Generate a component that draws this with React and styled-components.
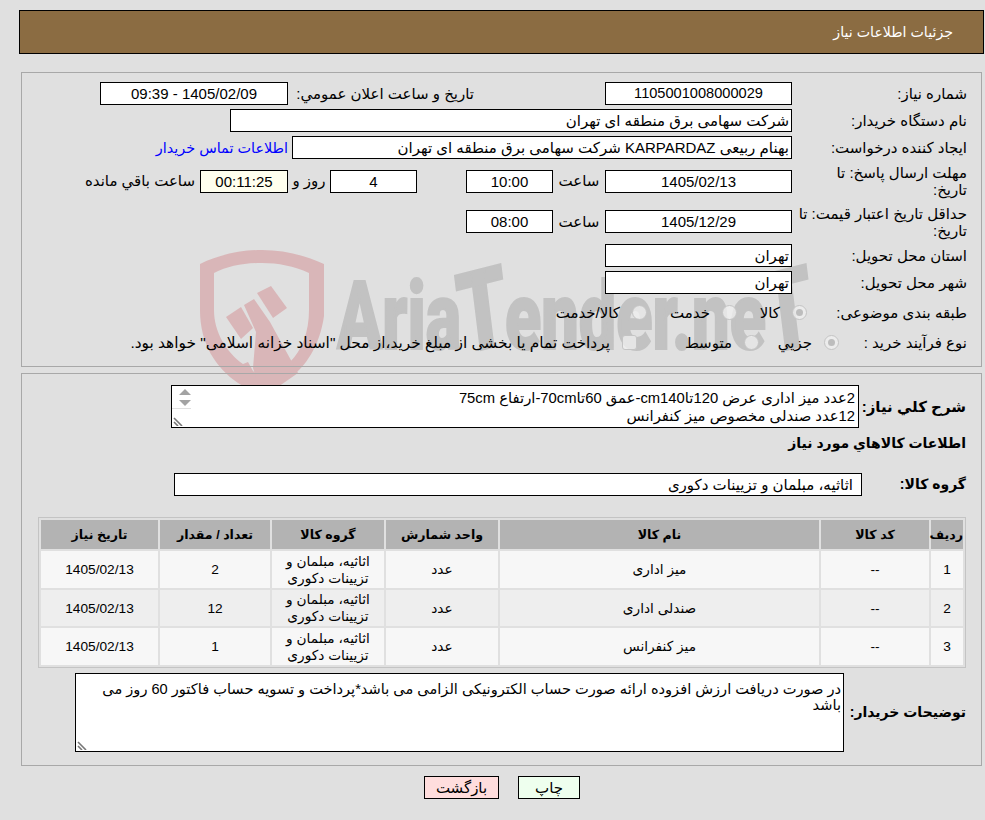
import styled, { createGlobalStyle, css } from 'styled-components'

const GlobalStyle = createGlobalStyle`
  html, body {
    margin: 0;
    padding: 0;
    background: #e0e0e0;
  }
  body {
    font-family: "Liberation Sans", "DejaVu Sans", sans-serif;
    font-size: 15px;
    color: #000;
  }
  * { box-sizing: border-box; }
`

const Page = styled.div`
  position: relative;
  width: 985px;
  height: 820px;
  padding: 10px 1px 0 19px;
  direction: rtl;
  overflow: hidden;
`
const Header = styled.div`
  height: 44px;
  background: #8b6c42;
  border: 1px solid #000;
  color: #fff;
  font-size: 14.2px;
  line-height: 42px;
  padding-right: 30px;
`
const Panel = styled.div`
  position: relative;
  z-index: 1;
  margin: ${p => p.$top}px 2px 0 2px;
  height: ${p => p.$h}px;
  border: 1px solid #a8a8a8;
  padding: ${p => p.$pad}px ${p => p.$side}px 0 15px;
`
const Rows = styled.div`
  display: flex;
  flex-direction: column;
  gap: 4px;
`
const Row = styled.div`
  display: flex;
  align-items: center;
  height: ${p => p.$h || 23}px;
`
const Label = styled.div`
  flex: none;
  width: ${p => p.$w || 175}px;
  white-space: nowrap;
  line-height: 17px;
  ${p => p.$bold && css`font-weight: bold; font-size: 14px;`}
  ${p => p.$big && css`font-size: 15px;`}
`
const Field = styled.div`
  flex: none;
  width: ${p => p.$w}px;
  height: ${p => p.$h || 23}px;
  margin-inline-start: ${p => p.$ms || 0}px;
  background: ${p => p.$bg || '#fff'};
  border: 1px solid #000;
  font-size: ${p => (p.$start || p.$date ? 15 : 14.6)}px;
  line-height: 21px;
  white-space: nowrap;
  overflow: hidden;
  text-align: ${p => (p.$start ? 'right' : 'center')};
  padding: 0 ${p => (p.$start ? 2 : 0)}px;
`
const Inline = styled.span`
  flex: none;
  width: ${p => p.$w || 'auto'}${p => (p.$w ? 'px' : '')};
  margin-inline-start: ${p => p.$ms || 0}px;
  text-align: ${p => (p.$w ? 'center' : 'right')};
  white-space: nowrap;
`
const ContactLink = styled.a`
  flex: none;
  margin-inline-start: 4px;
  color: #0000ff;
  font-size: 14.4px;
  white-space: nowrap;
`
const Radio = styled.span`
  flex: none;
  width: 15px;
  height: 15px;
  border-radius: ${p => (p.$square ? '3px' : '50%')};
  border: 1px solid #c4c4c4;
  background: rgba(240, 240, 240, 0.75);
  display: flex;
  align-items: center;
  justify-content: center;
  &::after {
    content: '';
    width: 7px;
    height: 7px;
    border-radius: 50%;
    background: ${p => (p.$on ? '#bdbdbd' : 'transparent')};
  }
`
const RadioText = styled.span`
  flex: none;
  width: ${p => p.$w}px;
  margin-inline-start: 12px;
  font-size: ${p => p.$size || 15}px;
  white-space: nowrap;
`
const Watermark = styled.div`
  position: absolute;
  left: 198px;
  top: 248px;
  z-index: 0;
  pointer-events: none;
`
const WatermarkText = styled.div`
  position: absolute;
  left: 337px;
  top: 252px;
  z-index: 0;
  direction: ltr;
  color: #c2c2c2;
  font-family: "Roboto", "Liberation Sans", sans-serif;
  font-weight: 900;
  font-size: 95px;
  line-height: 130px;
  -webkit-text-stroke: 2px #c2c2c2;
  white-space: nowrap;
  transform: scaleX(0.7);
  transform-origin: left center;
  pointer-events: none;
`
const WatermarkCap = styled.span`
  display: inline-block;
  font-size: 112px;
  line-height: 100px;
  margin: 0 -4px;
  transform: rotate(-10deg);
`
const TextBox = styled.div`
  position: relative;
  flex: none;
  width: ${p => p.$w}px;
  height: ${p => p.$h}px;
  background: #fff;
  border: 1px solid #000;
  font-size: ${p => p.$size || 14.8}px;
  padding: ${p => p.$pad || '3px 3px 0 0'};
  line-height: ${p => p.$lh}px;
  overflow: hidden;
`
const Gutter = styled.div`
  position: absolute;
  left: 0;
  top: 0;
  width: 19px;
  height: 100%;
  background: #fff;
`
const GutterRule = styled.div`
  height: 1px;
  margin-top: 2px;
  background: #e0e0e0;
`
const Arrow = styled.span`
  display: block;
  width: 0;
  margin: ${p => p.$top}px 0 0 3px;
  border-left: 6px solid transparent;
  border-right: 6px solid transparent;
  ${p => (p.$up
    ? css`border-bottom: 6px solid #a3a3a3;`
    : css`border-top: 6px solid #a3a3a3;`)}
`
const GripBox = styled.svg`
  position: absolute;
  left: 1px;
  bottom: 1px;
  width: 10px;
  height: 10px;
`
const SectionTitle = styled.div`
  font-weight: bold;
  font-size: 14px;
  height: 22px;
  line-height: 22px;
  margin-top: 4px;
  white-space: nowrap;
`
const ItemsTable = styled.table`
  direction: rtl;
  width: 928px;
  margin: ${p => p.$top}px 0 0 0;
  table-layout: fixed;
  border: 1px solid #c4c4c4;
  border-spacing: 2px;
  font-size: 13.7px;
`
const Head = styled.th`
  background: #b3b3b3;
  height: 29px;
  padding: 0;
  font-weight: bold;
  font-size: 12.6px;
  white-space: nowrap;
`
const Cell = styled.td`
  background: ${p => (p.$even ? '#eeeeee' : '#f7f7f7')};
  height: ${p => p.$h}px;
  padding: 0;
  text-align: center;
  line-height: 17px;
`
const Actions = styled.div`
  position: relative;
  z-index: 1;
  display: flex;
  justify-content: center;
  gap: 19px;
  margin: 10px 0 0 1px;
`
const Button = styled.button`
  width: ${p => p.$w}px;
  height: 23px;
  padding: 0;
  background: ${p => p.$bg};
  border: 1px solid #000;
  font: inherit;
  color: #000;
`

const Grip = () => (
  <GripBox viewBox="0 0 10 10">
    <path d="M1 2 L9 10 M1 6 L5 10" stroke="#777" strokeWidth="1.6" fill="none" />
  </GripBox>
)

const Logo = () => (
  <svg width="130" height="150" viewBox="0 0 130 150">
    <g fill="#d9b6b8">
      <path
        fillRule="evenodd"
        d="M2 16 C22 6 44 2 64 2 C86 2 106 7 126 16 L126 68 C122 98 106 120 95 127 L64 150 L40 135 C18 120 2 96 2 62 Z
           M16 25 L16 62 C16 84 28 104 45 116 L50 114 L55 123 L65 131 L92 114 C104 102 111 84 111 62 L111 25 C96 18 80 15 64 15 C46 15 30 18 16 25 Z"
      />
      <path d="M28 69 L43 59 L55 80 L43 91 Z" />
      <path d="M59 45 L73 38 L89 60 L75 70 Z" />
      <path d="M46 57 L56 51 L72 74 L100 125 L64 150 L55 120 L58 84 Z" />
    </g>
  </svg>
)

const items = [
  { id: 1, name: 'میز اداری', qty: 2, h: 37 },
  { id: 2, name: 'صندلی اداری', qty: 12, h: 36 },
  { id: 3, name: 'میز کنفرانس', qty: 1, h: 37 },
]

const App = () => {
  return (
    <Page>
      <GlobalStyle />
      <Watermark><Logo /></Watermark>
      <WatermarkText>Aria<WatermarkCap>T</WatermarkCap>ender.ne<WatermarkCap>T</WatermarkCap></WatermarkText>
      <Header>جزئیات اطلاعات نیاز</Header>

      <Panel $top={18} $h={295} $pad={9} $side={14}>
        <Rows>
          <Row>
            <Label>شماره نیاز:</Label>
            <Field $w={187}>1105001008000029</Field>
            <Label $w={181} style={{ marginInlineStart: 131 }}>تاریخ و ساعت اعلان عمومي:</Label>
            <Field $w={188} $ms={5} $date>1405/02/09 - 09:39</Field>
          </Row>
          <Row>
            <Label>نام دستگاه خریدار:</Label>
            <Field $w={562} $start>شرکت سهامی برق منطقه ای تهران</Field>
          </Row>
          <Row>
            <Label>ایجاد کننده درخواست:</Label>
            <Field $w={500} $start>بهنام ربیعی KARPARDAZ شرکت سهامی برق منطقه ای تهران</Field>
            <ContactLink>اطلاعات تماس خریدار</ContactLink>
          </Row>
          <Row $h={36}>
            <Label>مهلت ارسال پاسخ: تا<br />تاریخ:</Label>
            <Field $w={187} $date>1405/02/13</Field>
            <Inline $w={52}>ساعت</Inline>
            <Field $w={87} $date>10:00</Field>
            <Field $w={87} $ms={49} $date>4</Field>
            <Inline $w={42}>روز و</Inline>
            <Field $w={88} $bg="#ffffee" $date>00:11:25</Field>
            <Inline $ms={5}>ساعت باقي مانده</Inline>
          </Row>
          <Row $h={37}>
            <Label>حداقل تاریخ اعتبار قیمت: تا<br />تاریخ:</Label>
            <Field $w={187} $date>1405/12/29</Field>
            <Inline $w={52}>ساعت</Inline>
            <Field $w={87} $date>08:00</Field>
          </Row>
          <Row>
            <Label>استان محل تحویل:</Label>
            <Field $w={187} $start>تهران</Field>
          </Row>
          <Row>
            <Label>شهر محل تحویل:</Label>
            <Field $w={187} $start>تهران</Field>
          </Row>
          <Row $h={29}>
            <Label $w={160}>طبقه بندی موضوعی:</Label>
            <Radio $on />
            <RadioText $w={43}>کالا</RadioText>
            <Radio />
            <RadioText $w={63}>خدمت</RadioText>
            <Radio />
            <RadioText $w={70}>کالا/خدمت</RadioText>
          </Row>
          <Row>
            <Label $w={128}>نوع فرآیند خرید :</Label>
            <Radio $on />
            <RadioText $w={53}>جزیي</RadioText>
            <Radio />
            <RadioText $w={95}>متوسط</RadioText>
            <Radio $square />
            <RadioText $w={480} $size={15.4}>پرداخت تمام یا بخشی از مبلغ خرید،از محل "اسناد خزانه اسلامی" خواهد بود.</RadioText>
          </Row>
        </Rows>
      </Panel>

      <Panel $top={6} $h={393} $pad={11} $side={15}>
        <Row $h={43}>
          <Label $w={107} $bold $big>شرح کلي نیاز:</Label>
          <TextBox $w={688} $h={43} $lh={18}>
            2عدد میز اداری عرض 120تاcm140-عمق 60تا70cm-ارتفاع 75cm<br />
            12عدد صندلی مخصوص میز کنفرانس
            <Gutter>
              <Arrow $up $top={3} />
              <Arrow $top={5} />
              <GutterRule />
              <Grip />
            </Gutter>
          </TextBox>
        </Row>
        <SectionTitle>اطلاعات کالاهاي مورد نیاز</SectionTitle>
        <Row style={{ marginTop: 19 }}>
          <Label $w={104} $bold>گروه کالا:</Label>
          <Field $w={688} $start style={{ paddingRight: 8 }}>اثاثیه، مبلمان و تزیینات دکوری</Field>
        </Row>
        <ItemsTable $top={21}>
          <colgroup>
            <col width="32" /><col width="108" /><col width="319" /><col width="112" />
            <col width="112" /><col width="110" /><col width="117" />
          </colgroup>
          <thead>
            <tr>
              <Head>ردیف</Head>
              <Head>کد کالا</Head>
              <Head>نام کالا</Head>
              <Head>واحد شمارش</Head>
              <Head>گروه کالا</Head>
              <Head>تعداد / مقدار</Head>
              <Head>تاریخ نیاز</Head>
            </tr>
          </thead>
          <tbody>
            {items.map((item, i) => (
              <tr key={item.id}>
                <Cell $h={item.h} $even={i === 1}>{item.id}</Cell>
                <Cell $even={i === 1}>--</Cell>
                <Cell $even={i === 1}>{item.name}</Cell>
                <Cell $even={i === 1}>عدد</Cell>
                <Cell $even={i === 1}>اثاثیه، مبلمان و<br />تزیینات دکوری</Cell>
                <Cell $even={i === 1}>{item.qty}</Cell>
                <Cell $even={i === 1}>1405/02/13</Cell>
              </tr>
            ))}
          </tbody>
        </ItemsTable>
        <Row $h={79} style={{ marginTop: 5 }}>
          <Label $w={122} $bold>توضیحات خریدار:</Label>
          <TextBox $w={769} $h={79} $lh={16} $size={14.6} $pad="7px 2px 0 10px">
            در صورت دریافت ارزش افزوده ارائه صورت حساب الکترونیکی الزامی می باشد*پرداخت و تسویه حساب فاکتور 60 روز می باشد
            <Grip />
          </TextBox>
        </Row>
      </Panel>

      <Actions>
        <Button $w={62} $bg="#eeffee">چاپ</Button>
        <Button $w={75} $bg="#ffdddd">بازگشت</Button>
      </Actions>
    </Page>
  )
}

export default App
